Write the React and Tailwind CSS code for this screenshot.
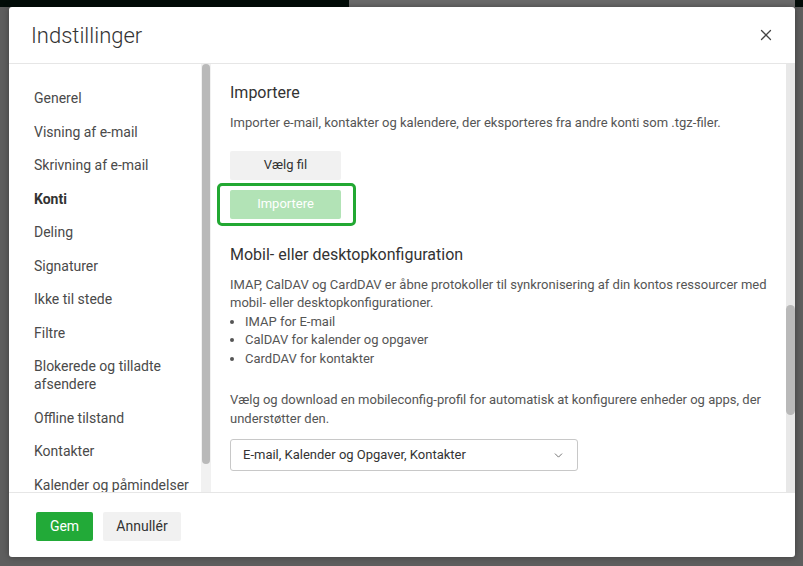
import { X, ChevronDown } from 'lucide-react';

const NAV = [
  'Generel', 'Visning af e-mail', 'Skrivning af e-mail', 'Konti', 'Deling', 'Signaturer',
  'Ikke til stede', 'Filtre', 'Blokerede og tilladte afsendere', 'Offline tilstand',
  'Kontakter', 'Kalender og påmindelser',
];

export default function App() {
  return (
    <div className="h-[566px] w-[803px] overflow-hidden bg-[#5e5e5e] font-['Roboto',sans-serif] flex flex-col">
      <div className="flex h-[7px] shrink-0">
        <div className="w-[349px] bg-[#020c08]" />
        <div className="flex-1 bg-[#6a6a6a]" />
        <div className="w-[8px] bg-[#020c08]" />
      </div>
      <div className="flex">
        <div className="ml-[9px] flex h-[550px] w-[786px] flex-col overflow-hidden rounded-[3px] bg-white shadow-[0_0_6px_rgba(0,0,0,0.35)]">
          {/* header */}
          <div className="flex h-[57px] shrink-0 items-center justify-between border-b border-[#e6e6e6] pl-[22px] pr-[20px]">
            <h1 className="text-[22px] font-light text-[#333]">Indstillinger</h1>
            <X size={18} strokeWidth={1.7} className="text-[#444]" />
          </div>

          {/* body */}
          <div className="flex min-h-0 flex-1">
            <div className="flex w-[202px] shrink-0">
              <nav className="flex-1 pl-[25px] pt-[25px] text-[14px] leading-[18px] text-[#4a4a4a]">
                {NAV.map(n => (
                  <div key={n} className={`pb-[15.5px] ${n === 'Konti' ? 'font-bold text-[#333]' : ''}`}>{n}</div>
                ))}
              </nav>
              <div className="w-[10px] bg-[#f1f1f1] pl-[1px] pr-[1px]">
                <div className="h-[400px] rounded-full bg-[#b9b9b9]" />
              </div>
            </div>

            <div className="flex min-w-0 flex-1">
              <div className="flex-1 pl-[19px] pt-[17px] text-[#555]">
                <h2 className="text-[16px] text-[#333]">Importere</h2>
                <p className="mt-[8px] text-[13px]">Importer e-mail, kontakter og kalendere, der eksporteres fra andre konti som .tgz-filer.</p>
                <button className="mt-[18px] block h-[29px] w-[111px] rounded-[2px] bg-[#f1f1f1] text-[13px] text-[#333]">Vælg fil</button>
                <div className="ml-[-13px] mt-[3px] w-[139px] rounded-[5px] border-[3px] border-[#22a832] px-[10px] py-[4px]">
                  <button className="block h-[29px] w-[111px] rounded-[2px] bg-[#b2e3b6] text-[13px] text-white">Importere</button>
                </div>

                <h2 className="mt-[17px] text-[16px] text-[#333]">Mobil- eller desktopkonfiguration</h2>
                <div className="mt-[9px] text-[13px] leading-[18.5px]">
                  <p>IMAP, CalDAV og CardDAV er åbne protokoller til synkronisering af din kontos ressourcer med mobil- eller desktopkonfigurationer.</p>
                  <ul className="list-disc pl-[15px]">
                    <li>IMAP for E-mail</li>
                    <li>CalDAV for kalender og opgaver</li>
                    <li>CardDAV for kontakter</li>
                  </ul>
                  <p className="mt-[23px]">Vælg og download en mobileconfig-profil for automatisk at konfigurere enheder og apps, der understøtter den.</p>
                </div>
                <div className="mt-[11px] flex h-[32px] w-[348px] items-center justify-between rounded-[3px] border border-[#c8c8c8] pl-[12px] pr-[12px] text-[13px] text-[#333]">
                  <span>E-mail, Kalender og Opgaver, Kontakter</span>
                  <ChevronDown size={13} strokeWidth={1.5} className="text-[#555]" />
                </div>
              </div>
              <div className="w-[9px] bg-[#e8e8e8] pt-[241px]">
                <div className="h-[110px] rounded-full bg-[#b9b9b9]" />
              </div>
            </div>
          </div>

          {/* footer */}
          <div className="flex h-[65px] shrink-0 items-center gap-[10px] border-t border-[#e6e6e6] pl-[27px] pt-[2px]">
            <button className="h-[29px] w-[57px] rounded-[2px] bg-[#22aa38] text-[14px] text-white">Gem</button>
            <button className="h-[29px] w-[78px] rounded-[2px] bg-[#f1f1f1] text-[14px] text-[#333]">Annullér</button>
          </div>
        </div>
      </div>
    </div>
  );
}
